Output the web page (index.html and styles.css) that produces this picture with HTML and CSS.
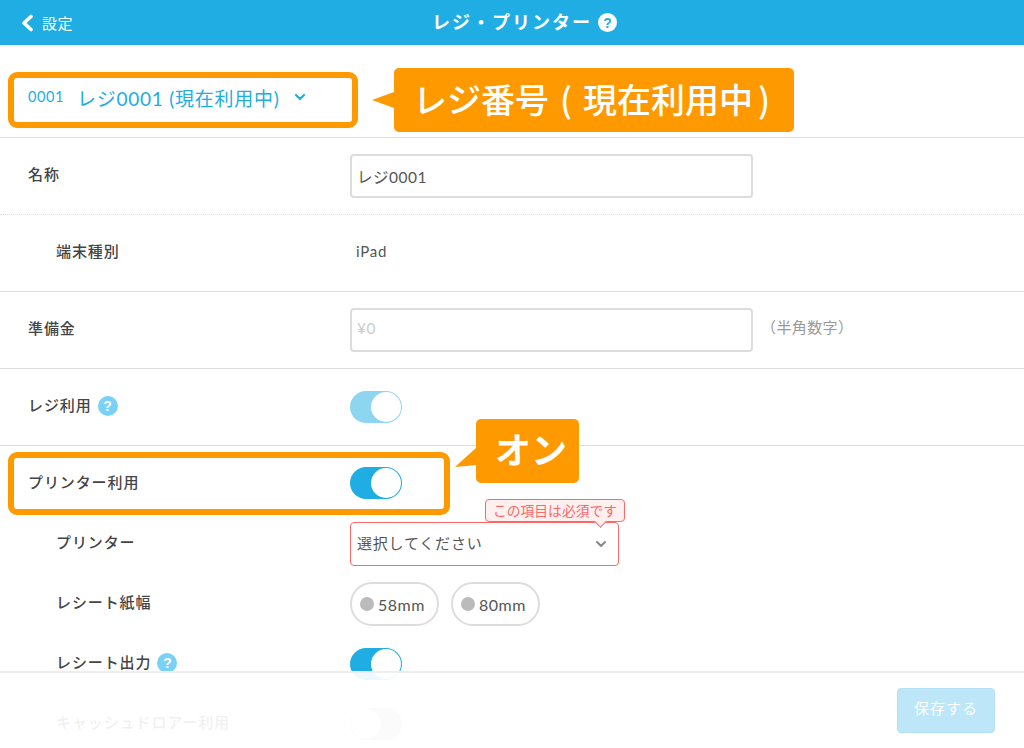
FILE: index.html
```html
<!DOCTYPE html>
<html lang="ja">
<head>
<meta charset="utf-8">
<title>レジ・プリンター</title>
<link rel="stylesheet" href="styles.css">
</head>
<body>
<div class="page">
  <header class="topbar">
    <a class="back">
      <svg class="back-icon" viewBox="0 0 14 18" width="14" height="18"><polyline points="11,2.5 4,9 11,15.5" fill="none" stroke="#fff" stroke-width="3.6" stroke-linecap="round" stroke-linejoin="round"/></svg>
      <span>設定</span>
    </a>
    <div class="title"><span>レジ・プリンター</span><span class="help help-white">?</span></div>
  </header>

  <section class="register-bar">
    <span class="register-no">0001</span>
    <span class="register-name">レジ0001 (現在利用中)</span>
    <svg class="register-chevron" viewBox="0 0 12 8" width="12" height="8"><polyline points="2,2 6,6 10,2" fill="none" stroke="#20ade3" stroke-width="2.2" stroke-linecap="round" stroke-linejoin="round"/></svg>
  </section>

  <div class="row row-dotted">
    <div class="label">名称</div>
    <div class="field">レジ0001</div>
  </div>
  <div class="row">
    <div class="label label-sub">端末種別</div>
    <div class="static">iPad</div>
  </div>
  <div class="row">
    <div class="label">準備金</div>
    <div class="field field-placeholder">¥0</div>
    <div class="note">（半角数字）</div>
  </div>
  <div class="row">
    <div class="label">レジ利用<span class="help help-blue">?</span></div>
    <div class="toggle toggle-dim"><span class="knob"></span></div>
  </div>
  <div class="row row-plain">
    <div class="label">プリンター利用</div>
    <div class="toggle"><span class="knob"></span></div>
  </div>

  <div class="subrows">
    <div class="subrow">
      <div class="label label-sub">プリンター</div>
      <div class="select-wrap">
        <div class="select">
          <span class="select-text">選択してください</span>
          <svg viewBox="0 0 12 8" width="12" height="8"><polyline points="2,2 6,6 10,2" fill="none" stroke="#888" stroke-width="2" stroke-linecap="round" stroke-linejoin="round"/></svg>
        </div>
        <div class="error-tip">この項目は必須です</div>
      </div>
    </div>
    <div class="subrow">
      <div class="label label-sub">レシート紙幅</div>
      <div class="pills">
        <div class="pill"><span class="dot"></span>58mm</div>
        <div class="pill"><span class="dot"></span>80mm</div>
      </div>
    </div>
    <div class="subrow">
      <div class="label label-sub">レシート出力<span class="help help-blue">?</span></div>
      <div class="toggle"><span class="knob"></span></div>
    </div>
    <div class="subrow">
      <div class="label label-sub">キャッシュドロアー利用</div>
      <div class="toggle toggle-off"><span class="knob"></span></div>
    </div>
  </div>

  <footer class="footer">
    <button class="save">保存する</button>
  </footer>

  <div class="mark mark-register"></div>
  <div class="callout callout-register">レジ番号<span class="paren paren-open">(</span>現在利用中<span class="paren paren-close">)</span></div>
  <div class="mark mark-printer"></div>
  <div class="callout callout-on">オン</div>
</div>
</body>
</html>
```
FILE: styles.css
```css
* { box-sizing: border-box; }
html, body { margin: 0; padding: 0; background: #fff; }
body { font-family: "Noto Sans CJK JP", "Noto Sans", sans-serif; color: #444; }
.page { position: relative; width: 1024px; height: 748px; overflow: hidden; background: #fff; }

.topbar { height: 45px; background: #20ade3; color: #fff; display: flex; align-items: center; justify-content: center; position: relative; padding-bottom: 3px; }
.back { position: absolute; left: 20px; top: 0; height: 45px; display: flex; align-items: center; gap: 8px; font-size: 15px; letter-spacing: .5px; }
.title { display: flex; align-items: center; gap: 6px; padding-left: 25px; font-size: 18px; font-weight: 700; letter-spacing: 2px; }

.help { display: inline-flex; align-items: center; justify-content: center; border-radius: 50%; font-weight: 700; letter-spacing: 0; font-family: "Liberation Sans", sans-serif; }
.help-white { width: 19px; height: 19px; background: #fff; color: #20ade3; font-size: 14px; margin-top: 3px; }
.help-blue { width: 20px; height: 20px; background: #79d2f5; color: #fff; font-size: 14px; margin-left: 6px; margin-top: 3px; }

.register-bar { height: 93px; border-bottom: 1px solid #ddd; padding: 12px 0 0 28px; display: flex; align-items: center; color: #20ade3; }
.register-no { font-size: 14.5px; width: 49px; margin-top: -1px; font-family: "Lato", sans-serif; letter-spacing: .6px; flex: none; }
.register-name { font-family: "Lato", "Noto Sans CJK JP", sans-serif; font-size: 19px; letter-spacing: .75px; }
.register-chevron { margin-left: 14px; }

.row { height: 77px; border-bottom: 1px solid #ddd; display: flex; align-items: center; }
.row-dotted { border-bottom: 1px dotted #ddd; }
.row-plain { height: 74px; border-bottom: 0; }
.row-plain .label { padding-bottom: 3px; }

.label { width: 350px; flex: none; padding: 0 0 5px 28px; font-size: 15px; font-weight: 500; color: #444; letter-spacing: .9px; display: flex; align-items: center; }
.label-sub { padding-left: 56px; }

.field { width: 403px; height: 44px; border: 2px solid #dcdcdc; border-radius: 4px; padding: 0 5px 1px; display: flex; align-items: center; font-family: "Lato", "Noto Sans CJK JP", sans-serif; font-size: 15.5px; color: #555; letter-spacing: .5px; }
.field-placeholder { color: #ccc; padding-bottom: 4px; }
.static { font-family: "Lato", sans-serif; font-size: 15px; color: #555; letter-spacing: .8px; margin-left: 6px; padding-bottom: 4px; }
.note { margin-left: 8px; padding-bottom: 7px; font-size: 15px; color: #999; letter-spacing: .4px; }

.toggle { width: 52px; height: 32px; border-radius: 16px; background: #20ade3; position: relative; }
.toggle-dim { opacity: .5; }
.knob { position: absolute; right: 1px; top: 1px; width: 30px; height: 30px; border-radius: 50%; background: #fff; }
.toggle-off { background: #ccc; }
.toggle-off .knob { right: auto; left: 1px; }

.subrows { padding-top: 2px; display: flex; flex-direction: column; gap: 16px; }
.subrow { height: 44px; display: flex; align-items: center; }

.select-wrap { position: relative; }
.select { width: 269px; height: 44px; border: 1px solid #ff6666; border-radius: 4px; padding: 0 11px 0 6px; display: flex; align-items: center; justify-content: space-between; font-size: 15px; color: #555; letter-spacing: .8px; }
.select-text { padding-bottom: 3px; }
.error-tip { position: absolute; left: 135px; top: -23px; width: 140px; height: 23px; padding-bottom: 1px; border: 1px solid #ff6666; border-radius: 4px; background: #fff0f0; color: #ff6666; font-size: 13.8px; display: flex; align-items: center; justify-content: center; white-space: nowrap; }
.error-tip::after { content: ""; position: absolute; left: 110px; bottom: -5px; width: 8px; height: 8px; background: #fff0f0; border-right: 1px solid #ff6666; border-bottom: 1px solid #ff6666; transform: rotate(45deg); }

.pills { display: flex; gap: 12px; }
.pill { width: 89px; height: 44px; border: 2px solid #ddd; border-radius: 22px; padding-left: 8px; display: flex; align-items: center; gap: 4px; font-family: "Lato", sans-serif; font-size: 16px; color: #555; letter-spacing: .5px; }
.dot { width: 14px; height: 14px; border-radius: 50%; background: #bbb; }

.footer { position: absolute; left: 0; right: 0; bottom: 0; height: 77px; background: rgba(255,255,255,.92); border-top: 2px solid #eee; display: flex; justify-content: flex-end; align-items: flex-start; padding: 15px 29px 0 0; }
.save { width: 98px; height: 45px; border: 1px solid #b5e0f4; border-radius: 4px; background: #bde6f8; color: #fff; font: 400 15px "Noto Sans CJK JP", sans-serif; letter-spacing: 1px; padding: 0 0 6px; }

.mark { position: absolute; border: 6px solid #ff9900; border-radius: 9px; background: transparent; }
.mark-register { left: 8px; top: 72px; width: 350px; height: 56px; }
.mark-printer { left: 8px; top: 452px; width: 442px; height: 63px; }

.callout { position: absolute; background: #ff9900; border-radius: 5px; color: #fff; font-weight: 500; display: flex; align-items: center; white-space: nowrap; }
.callout::before { content: ""; position: absolute; }
.callout-register { left: 394px; top: 68px; width: 400px; height: 64px; padding: 0 0 3px 19px; font-size: 34px; }
.callout-register::before { left: -22px; top: 24px; border-style: solid; border-width: 8px 22px 8px 0; border-color: transparent #ff9900 transparent transparent; }
.paren-open { margin: 0 11px; }
.paren-close { margin-left: 5px; }
.callout-on { left: 476px; top: 419px; width: 103px; height: 64px; padding: 0 0 6px 19px; font-size: 36px; font-weight: 700; }
.callout-on::before { left: -21px; top: 28px; width: 22px; height: 20px; background: #ff9900; clip-path: polygon(100% 0, 100% 90%, 0 100%); }
```
